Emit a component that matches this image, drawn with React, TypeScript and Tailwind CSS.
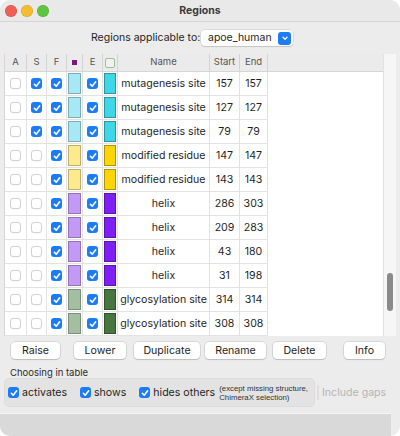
import type React from "react";

type Row = {
  a: boolean;
  s: boolean;
  f: boolean;
  light: string;
  dark: string;
  name: string;
  start: number;
  end: number;
};

const CYAN = { light: "bg-[#a6e9f4]", dark: "bg-[#3fd6e8]" };
const GOLD = { light: "bg-[#fde98e]", dark: "bg-[#fdd508]" };
const VIOLET = { light: "bg-[#c29af6]", dark: "bg-[#7f1ff6]" };
const GREEN = { light: "bg-[#a4bea1]", dark: "bg-[#46773e]" };

const rows: Row[] = [
  { a: false, s: true, f: true, ...CYAN, name: "mutagenesis site", start: 157, end: 157 },
  { a: false, s: true, f: true, ...CYAN, name: "mutagenesis site", start: 127, end: 127 },
  { a: false, s: true, f: true, ...CYAN, name: "mutagenesis site", start: 79, end: 79 },
  { a: false, s: false, f: true, ...GOLD, name: "modified residue", start: 147, end: 147 },
  { a: false, s: false, f: true, ...GOLD, name: "modified residue", start: 143, end: 143 },
  { a: false, s: false, f: true, ...VIOLET, name: "helix", start: 286, end: 303 },
  { a: false, s: false, f: true, ...VIOLET, name: "helix", start: 209, end: 283 },
  { a: false, s: false, f: true, ...VIOLET, name: "helix", start: 43, end: 180 },
  { a: false, s: false, f: true, ...VIOLET, name: "helix", start: 31, end: 198 },
  { a: false, s: false, f: true, ...GREEN, name: "glycosylation site", start: 314, end: 314 },
  { a: false, s: false, f: true, ...GREEN, name: "glycosylation site", start: 308, end: 308 },
];

const Check: React.FC<{ on: boolean; disabled?: boolean }> = ({ on, disabled }) =>
  on ? (
    <span className="flex h-[11px] w-[11px] shrink-0 items-center justify-center rounded-[3px] bg-[#1b7cf5]">
      <svg viewBox="0 0 12 12" className="h-[10px] w-[10px]">
        <path d="M2.8 6.3 L5.1 8.6 L9.2 3.4" fill="none" stroke="white" strokeWidth="1.9" strokeLinecap="round" strokeLinejoin="round" />
      </svg>
    </span>
  ) : (
    <span
      className={`h-[11px] w-[11px] shrink-0 rounded-[3px] border ${
        disabled ? "border-[#dedede] bg-[#f1f1f1]" : "border-[#d2d2d2] bg-white shadow-[0_0.5px_0.5px_rgba(0,0,0,0.06)]"
      }`}
    />
  );

const Button: React.FC<{ label: string; className?: string }> = ({ label, className = "" }) => (
  <div
    className={`flex h-[17px] items-center justify-center rounded-[4px] bg-white text-[10.6px] text-[#1e1e1e] shadow-[0_0_0_0.5px_rgba(0,0,0,0.18),0_1px_1px_rgba(0,0,0,0.12)] ${className}`}
  >
    {label}
  </div>
);

const cell = "flex h-full items-center justify-center border-r border-[#e2e2e2]";
const head = "flex h-full items-center justify-center border-r border-[#d3d3d3]";

export default function App() {
  return (
    <div className="h-[436px] w-[400px] bg-white font-['Inter',sans-serif] text-[10.6px] text-[#1f1f1f]">
      <div className="flex h-full w-full flex-col overflow-hidden rounded-[10px] bg-[#ececec]">
        {/* title bar */}
        <div className="grid h-[22px] shrink-0 grid-cols-[1fr_auto_1fr] items-center border-b border-[#d5d5d5] bg-[#e9e9e9]">
          <div className="flex gap-[4px] pl-[5px]">
            <span className="h-[12px] w-[12px] rounded-full bg-[#ee5f56] shadow-[inset_0_0_0_0.5px_rgba(0,0,0,0.15)]" />
            <span className="h-[12px] w-[12px] rounded-full bg-[#f5bc2f] shadow-[inset_0_0_0_0.5px_rgba(0,0,0,0.15)]" />
            <span className="h-[12px] w-[12px] rounded-full bg-[#5fc43f] shadow-[inset_0_0_0_0.5px_rgba(0,0,0,0.15)]" />
          </div>
          <div className="text-[10.5px] font-bold text-[#3a3a3a]">Regions</div>
          <div />
        </div>

        {/* applicable to */}
        <div className="flex h-[32px] shrink-0 items-center pl-[91px]">
          <span className="w-[104px] whitespace-nowrap text-[10.5px]">Regions applicable to:</span>
          <div className="ml-[6px] flex h-[16px] w-[92px] items-center justify-between rounded-[4px] bg-white pl-[7px] pr-[2px] text-[10.5px] shadow-[0_0_0_0.5px_rgba(0,0,0,0.15),0_1px_1px_rgba(0,0,0,0.1)]">
            <span>apoe_human</span>
            <span className="flex h-[13px] w-[13px] items-center justify-center rounded-[3px] bg-[#1f7cf5]">
              <svg viewBox="0 0 10 10" className="h-[8px] w-[8px]">
                <path d="M2.5 4 L5 6.5 L7.5 4" fill="none" stroke="white" strokeWidth="1.6" strokeLinecap="round" strokeLinejoin="round" />
              </svg>
            </span>
          </div>
        </div>

        {/* table */}
        <div className="mx-[4px] flex h-[282px] shrink-0">
          <div className="flex flex-1 flex-col border-l border-[#d6d6d6] bg-white">
            <div className="flex h-[18px] shrink-0 border-b border-[#d6d6d6] bg-[#ebebeb] text-[9.5px] text-[#555]">
              <div className={`${head} w-[22px]`}>A</div>
              <div className={`${head} w-[20px]`}>S</div>
              <div className={`${head} w-[20px]`}>F</div>
              <div className={`${head} w-[16px]`}>
                <span className="h-[5px] w-[5px] bg-[#7a1a7a]" />
              </div>
              <div className={`${head} w-[20px]`}>E</div>
              <div className={`${head} w-[15px]`}>
                <span className="h-[10px] w-[10px] rounded-[2px] border border-[#9dbf97] bg-[#f1f1f1]" />
              </div>
              <div className={`${head} w-[92px]`}>Name</div>
              <div className={`${head} w-[30px]`}>Start</div>
              <div className={`${head} w-[28px]`}>End</div>
            </div>
            {rows.map((r, i) => (
              <div key={i} className="flex h-[24px] w-[263px] shrink-0 border-b border-[#e2e2e2]">
                <div className={`${cell} w-[22px]`}>
                  <Check on={r.a} />
                </div>
                <div className={`${cell} w-[20px]`}>
                  <Check on={r.s} />
                </div>
                <div className={`${cell} w-[20px]`}>
                  <Check on={r.f} />
                </div>
                <div className="h-full w-[16px] border-r border-[#e2e2e2] p-[1px]">
                  <div className={`h-full w-full border border-black/25 ${r.light}`} />
                </div>
                <div className={`${cell} w-[20px]`}>
                  <Check on />
                </div>
                <div className="h-full w-[15px] border-r border-[#e2e2e2] p-[1px]">
                  <div className={`h-full w-full border border-black/30 ${r.dark}`} />
                </div>
                <div className={`${cell} w-[92px] whitespace-nowrap`}>{r.name}</div>
                <div className={`${cell} w-[30px]`}>{r.start}</div>
                <div className={`${cell} w-[28px]`}>{r.end}</div>
              </div>
            ))}
          </div>
          <div className="w-[13px] shrink-0 border-l border-[#e2e2e2] bg-[#f6f6f6] pl-[3px] pt-[219px]">
            <div className="h-[38px] w-[6px] rounded-full bg-[#8a8a8a]" />
          </div>
        </div>

        {/* buttons */}
        <div className="mt-[6px] flex shrink-0 pl-[11px]">
          <Button label="Raise" className="w-[49px]" />
          <Button label="Lower" className="ml-[14px] w-[52px]" />
          <Button label="Duplicate" className="ml-[8px] w-[66px]" />
          <Button label="Rename" className="ml-[5px] w-[61px]" />
          <Button label="Delete" className="ml-[7px] w-[53px]" />
          <Button label="Info" className="ml-[18px] w-[41px]" />
        </div>

        <div className="mt-[8px] h-[11px] shrink-0 pl-[10px] text-[9.5px] leading-[11px] text-[#2a2a2a]">Choosing in table</div>

        <div className="flex h-[29px] shrink-0 items-center whitespace-nowrap">
          <div className="ml-[4px] flex h-full w-[311px] items-center rounded-[5px] border border-[#dcdcdc] bg-[#e3e3e3] pl-[3px] text-[10.6px]">
            <Check on />
            <span className="ml-[3px]">activates</span>
            <span className="ml-[13px]">
              <Check on />
            </span>
            <span className="ml-[3px]">shows</span>
            <span className="ml-[13px]">
              <Check on />
            </span>
            <span className="ml-[3px]">hides others</span>
            <div className="ml-[4px] flex flex-col font-['Liberation_Sans',sans-serif] text-[7.8px] leading-[9px] text-[#333]">
              <span>(except missing structure,</span>
              <span>ChimeraX selection)</span>
            </div>
          </div>
          <span className="ml-[2px]">
            <Check on={false} disabled />
          </span>
          <span className="ml-[3px] text-[10.6px] text-[#b5b5b5]">Include gaps</span>
        </div>

        <div className="flex-1" />
        <div className="flex h-[23px] shrink-0">
          <div className="h-full w-[391px] border-t border-[#f5f5f5] bg-[#d9d9d9]" />
        </div>
      </div>
    </div>
  );
}
